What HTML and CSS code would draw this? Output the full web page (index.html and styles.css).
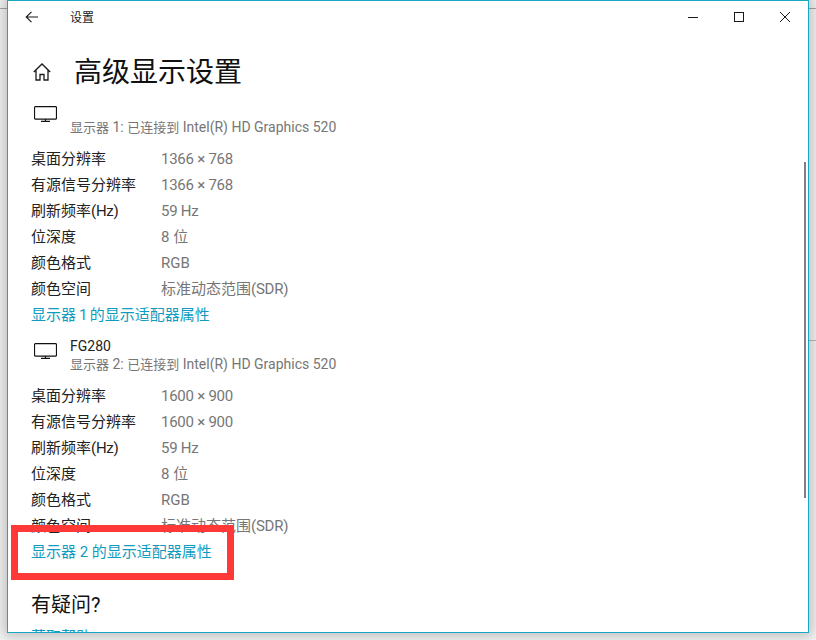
FILE: index.html
```html
<!DOCTYPE html>
<html lang="zh">
<head>
<meta charset="utf-8">
<title>设置</title>
<link rel="stylesheet" href="styles.css">
</head>
<body>
<div class="desktop">
  <div class="bg-line bg-line-top"></div>
  <div class="bg-line bg-line-mid"></div>
  <div class="window">
    <header class="titlebar">
      <div class="title-left">
        <svg class="back" width="14" height="12" viewBox="0 0 14 12"><path d="M13 6H1.500M6.500 .8 1.200 6l5.300 5.200" fill="none" stroke="#1a1a1a" stroke-width="1.100"/></svg>
        <span class="app-name">设置</span>
      </div>
      <div class="controls">
        <svg width="10" height="10" viewBox="0 0 10 10"><path d="M0 5.500h10" stroke="#1a1a1a" fill="none"/></svg>
        <svg width="10" height="10" viewBox="0 0 10 10"><rect x=".5" y=".5" width="9" height="9" stroke="#1a1a1a" fill="none"/></svg>
        <svg width="10" height="10" viewBox="0 0 10 10"><path d="M0 0l10 10M10 0L0 10" stroke="#1a1a1a" fill="none"/></svg>
      </div>
    </header>
    <main class="content">
      <div class="page-head">
        <svg class="home" width="18" height="18" viewBox="0 0 18 18"><path d="M.8 9 9 1l8.200 8M3 7.200V17h4v-5.500h4V17h4V7.200" fill="none" stroke="#1a1a1a" stroke-width="1.300"/></svg>
        <h1>高级显示设置</h1>
      </div>

      <section class="display first">
        <div class="display-head">
          <svg class="monitor" width="23" height="16" viewBox="0 0 23 16"><path d="M1.500.6h20a1 1 0 0 1 1 1v10.500a1 1 0 0 1-1 1h-20a1 1 0 0 1-1-1V1.600a1 1 0 0 1 1-1zM11.500 13.200v2M7 15.400h9" fill="none" stroke="#111" stroke-width="1.200"/></svg>
          <div class="display-names">
            <div class="name"></div>
            <div class="sub"><span class="han">显示器</span> 1: <span class="han">已连接到</span> Intel(R) HD Graphics 520</div>
          </div>
        </div>
        <dl class="rows">
          <div class="row"><dt>桌面分辨率</dt><dd class="latin">1366 × 768</dd></div>
          <div class="row"><dt>有源信号分辨率</dt><dd class="latin">1366 × 768</dd></div>
          <div class="row"><dt>刷新频率<span class="latin">(Hz)</span></dt><dd class="latin">59 Hz</dd></div>
          <div class="row"><dt>位深度</dt><dd>8 位</dd></div>
          <div class="row"><dt>颜色格式</dt><dd>RGB</dd></div>
          <div class="row"><dt>颜色空间</dt><dd>标准动态范围<span class="latin">(SDR)</span></dd></div>
        </dl>
        <a class="link">显示器<span class="tight"> 1 </span>的显示适配器属性</a>
      </section>

      <section class="display second">
        <div class="display-head">
          <svg class="monitor" width="23" height="16" viewBox="0 0 23 16"><path d="M1.500.6h20a1 1 0 0 1 1 1v10.500a1 1 0 0 1-1 1h-20a1 1 0 0 1-1-1V1.600a1 1 0 0 1 1-1zM11.500 13.200v2M7 15.400h9" fill="none" stroke="#111" stroke-width="1.200"/></svg>
          <div class="display-names">
            <div class="name">FG280</div>
            <div class="sub"><span class="han">显示器</span> 2: <span class="han">已连接到</span> Intel(R) HD Graphics 520</div>
          </div>
        </div>
        <dl class="rows">
          <div class="row"><dt>桌面分辨率</dt><dd class="latin">1600 × 900</dd></div>
          <div class="row"><dt>有源信号分辨率</dt><dd class="latin">1600 × 900</dd></div>
          <div class="row"><dt>刷新频率<span class="latin">(Hz)</span></dt><dd class="latin">59 Hz</dd></div>
          <div class="row"><dt>位深度</dt><dd>8 位</dd></div>
          <div class="row"><dt>颜色格式</dt><dd>RGB</dd></div>
          <div class="row"><dt>颜色空间</dt><dd>标准动态范围<span class="latin">(SDR)</span></dd></div>
        </dl>
        <a class="link">显示器 2 的显示适配器属性</a>
      </section>

      <section class="help">
        <h2>有疑问?</h2>
        <a class="link">获取帮助</a>
      </section>
    </main>
    <div class="scrollbar"></div>
  </div>
  <div class="highlight"></div>
</div>
</body>
</html>
```
FILE: styles.css
```css
* { box-sizing: border-box; }
html, body { margin: 0; height: 100%; }
body {
  font-family: Roboto, "Noto Sans CJK SC", sans-serif;
  font-size: 15px;
  overflow: hidden;
}
.desktop {
  position: relative;
  width: 816px;
  height: 640px;
  overflow: hidden;
  background: #f6f6f6;
}
.bg-line { position: absolute; background: #a8a8a8; height: 1px; }
.bg-line-top { left: 0; right: 0; top: 8px; }
.bg-line-mid { left: 808px; right: 0; top: 340px; background: #bdbdbd; }
.window {
  position: absolute;
  left: 7px;
  top: 0;
  width: 802px;
  height: 633px;
  background: #fff;
  border: 1px solid #1ba6c6;
  box-shadow: 0 0 12px 4px rgba(0, 0, 0, .22);
  overflow: hidden;
}
.titlebar {
  display: flex;
  justify-content: space-between;
  align-items: center;
  height: 31px;
}
.title-left { display: flex; align-items: center; padding-left: 17px; }
.app-name { margin-left: 31px; font-size: 12px; color: #222; }
.controls {
  display: flex;
  align-items: center;
  gap: 36px;
  padding-right: 18px;
}
.content { padding: 0 0 0 23px; }
.page-head {
  display: flex;
  align-items: center;
  height: 42px;
  margin-top: 19px;
}
.home { margin-left: 2px; }
h1 {
  margin: 2px 0 0 23px;
  font-size: 28px;
  font-weight: 400;
  color: #111;
  line-height: 42px;
}
.display-head { display: flex; padding-bottom: 9px; }
.first { margin-top: 11px; }
.second { margin-top: 9px; }
.monitor { margin-left: 3px; flex: none; }
.first .monitor { margin-top: 2px; }
.second .monitor { margin-top: 6px; }
.display-names { margin-left: 13px; }
.name { min-height: 14px; line-height: 18px; font-size: 14px; color: #222; }
.sub { line-height: 18px; font-size: 14px; color: #767676; }
.han { font-size: 13px; }
.rows { margin: 0; }
.row { display: flex; height: 26px; line-height: 26px; }
dt { width: 130px; color: #222; }
dd { margin: 0; color: #767676; }
.latin { letter-spacing: -.25px; }
.tight { letter-spacing: -.7px; }
.link { display: block; height: 26px; line-height: 26px; color: #0f9cc0; }
.help { margin-top: 25px; }
h2 {
  margin: 0 0 4px;
  font-size: 20px;
  font-weight: 400;
  color: #111;
  line-height: 30px;
}
.scrollbar {
  position: absolute;
  right: 2px;
  top: 161px;
  width: 2px;
  height: 336px;
  background: #7f7f7f;
}
.highlight {
  position: absolute;
  left: 11px;
  top: 525px;
  width: 223px;
  height: 55px;
  border: 7px solid #ff3838;
}
```
